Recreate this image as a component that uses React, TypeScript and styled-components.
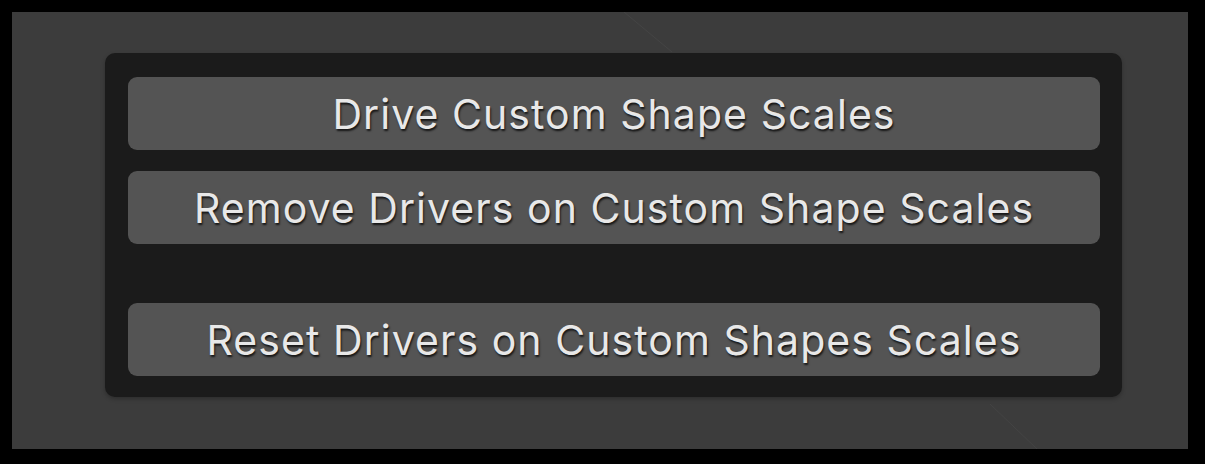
import React from "react";
import styled, { createGlobalStyle } from "styled-components";

const Global = createGlobalStyle`
  html, body { margin: 0; padding: 0; background: #000; }
  body { width: 1205px; height: 464px; overflow: hidden; }
`;

const Frame = styled.div`
  width: 1205px;
  height: 464px;
  box-sizing: border-box;
  padding: 12px 17px 15px 12px;
  background: #000;
`;

const Viewport = styled.div`
  position: relative;
  width: 100%;
  height: 100%;
  box-sizing: border-box;
  padding: 41px 0 0 93px;
  background: #3c3c3c;
  overflow: hidden;
`;

const Grid = styled.svg`
  position: absolute;
  inset: 0;
  pointer-events: none;
`;

const Panel = styled.div`
  position: relative;
  width: 1017px;
  height: 344px;
  box-sizing: border-box;
  padding: 24px 22px 21px 23px;
  background: #1b1b1b;
  border-radius: 10px;
  box-shadow: 0 2px 4px rgba(0, 0, 0, 0.25);
  display: flex;
  flex-direction: column;
`;

const Button = styled.div<{ $gapBefore?: number }>`
  height: 73px;
  margin-top: ${(p) => p.$gapBefore ?? 0}px;
  background: #545454;
  border-radius: 9px;
  display: flex;
  align-items: center;
  justify-content: center;
  font-family: "Inter", "DejaVu Sans", sans-serif;
  font-size: 41px;
  letter-spacing: 1.05px;
  color: #e8e8e8;
  text-shadow: 1px 2px 2px rgba(0, 0, 0, 0.75);
  white-space: nowrap;
`;

export default function App() {
  return (
    <>
      <Global />
      <Frame>
        <Viewport>
          <Grid width="1176" height="437">
            <line x1="612" y1="0" x2="660" y2="40" stroke="#444" strokeWidth="1" />
            <line x1="978" y1="392" x2="1025" y2="437" stroke="#444" strokeWidth="1" />
          </Grid>
          <Panel>
            <Button>Drive Custom Shape Scales</Button>
            <Button $gapBefore={21}>Remove Drivers on Custom Shape Scales</Button>
            <Button $gapBefore={59}>Reset Drivers on Custom Shapes Scales</Button>
          </Panel>
        </Viewport>
      </Frame>
    </>
  );
}
